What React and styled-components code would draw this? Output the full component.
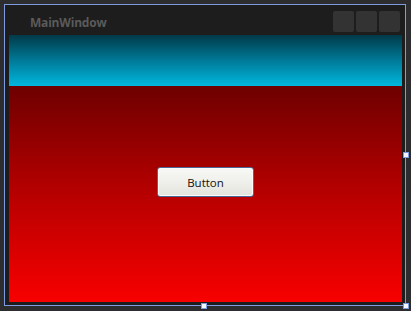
import React from 'react'
import styled, { createGlobalStyle } from 'styled-components'

const Global = createGlobalStyle`
  html, body {
    margin: 0;
    padding: 0;
    background: #2d2d2f;
    font-family: "Open Sans", "Liberation Sans", sans-serif;
  }
`

const Stage = styled.div`
  width: 411px;
  height: 311px;
  padding: 4px 0 0 4px;
  box-sizing: border-box;
`

const Selection = styled.div`
  position: relative;
  width: 402px;
  height: 302px;
  box-sizing: border-box;
  border: 1px solid #7f9be0;
`

const Handle = styled.div`
  position: absolute;
  width: 4px;
  height: 4px;
  background: #f4f6ff;
  border: 1px solid #7f9be0;
  ${p => p.$pos === 'right' && 'right: -4px; top: 147px;'}
  ${p => p.$pos === 'bottom' && 'bottom: -4px; left: 196px;'}
  ${p => p.$pos === 'corner' && 'right: -4px; bottom: -4px;'}
`

const Window = styled.div`
  height: 100%;
  background: #1d1d1d;
  display: flex;
  flex-direction: column;
  padding: 0 3px 3px 4px;
  box-sizing: border-box;
`

const TitleBar = styled.div`
  height: 30px;
  display: flex;
  align-items: center;
  justify-content: space-between;
  padding: 0 2px 0 21px;
`

const Title = styled.div`
  color: #5a5a5a;
  font-weight: 700;
  font-size: 12px;
  letter-spacing: -0.2px;
  margin-top: 4px;
`

const Controls = styled.div`
  display: flex;
  gap: 2px;
  align-self: flex-start;
  margin-top: 6px;
`

const ControlBox = styled.div`
  width: 21px;
  height: 21px;
  background: #333;
  border-radius: 2px;
`

const Header = styled.div`
  height: 51px;
  background: linear-gradient(to bottom, #003a48, #007a98 50%, #00b6dd);
`

const Body = styled.div`
  flex: 1;
  background: linear-gradient(to bottom, #6e0000, #b00000 45%, #f80000);
  display: flex;
  align-items: flex-start;
  justify-content: center;
  padding-top: 81px;
`

const Button = styled.button`
  width: 97px;
  height: 30px;
  border: 1px solid #4a6896;
  border-radius: 3px;
  box-shadow: inset 0 0 0 1px #fbfbfa;
  background: linear-gradient(to bottom, #f8f8f6, #efefeb 50%, #e4e4de);
  font-family: "Open Sans", "Liberation Sans", sans-serif;
  font-size: 11.5px;
  color: #111;
  padding: 0;
`

export default function App() {
  return (
    <Stage>
      <Global />
      <Selection>
        <Window>
          <TitleBar>
            <Title>MainWindow</Title>
            <Controls>
              <ControlBox />
              <ControlBox />
              <ControlBox />
            </Controls>
          </TitleBar>
          <Header />
          <Body>
            <Button>Button</Button>
          </Body>
        </Window>
        <Handle $pos="right" />
        <Handle $pos="bottom" />
        <Handle $pos="corner" />
      </Selection>
    </Stage>
  )
}
